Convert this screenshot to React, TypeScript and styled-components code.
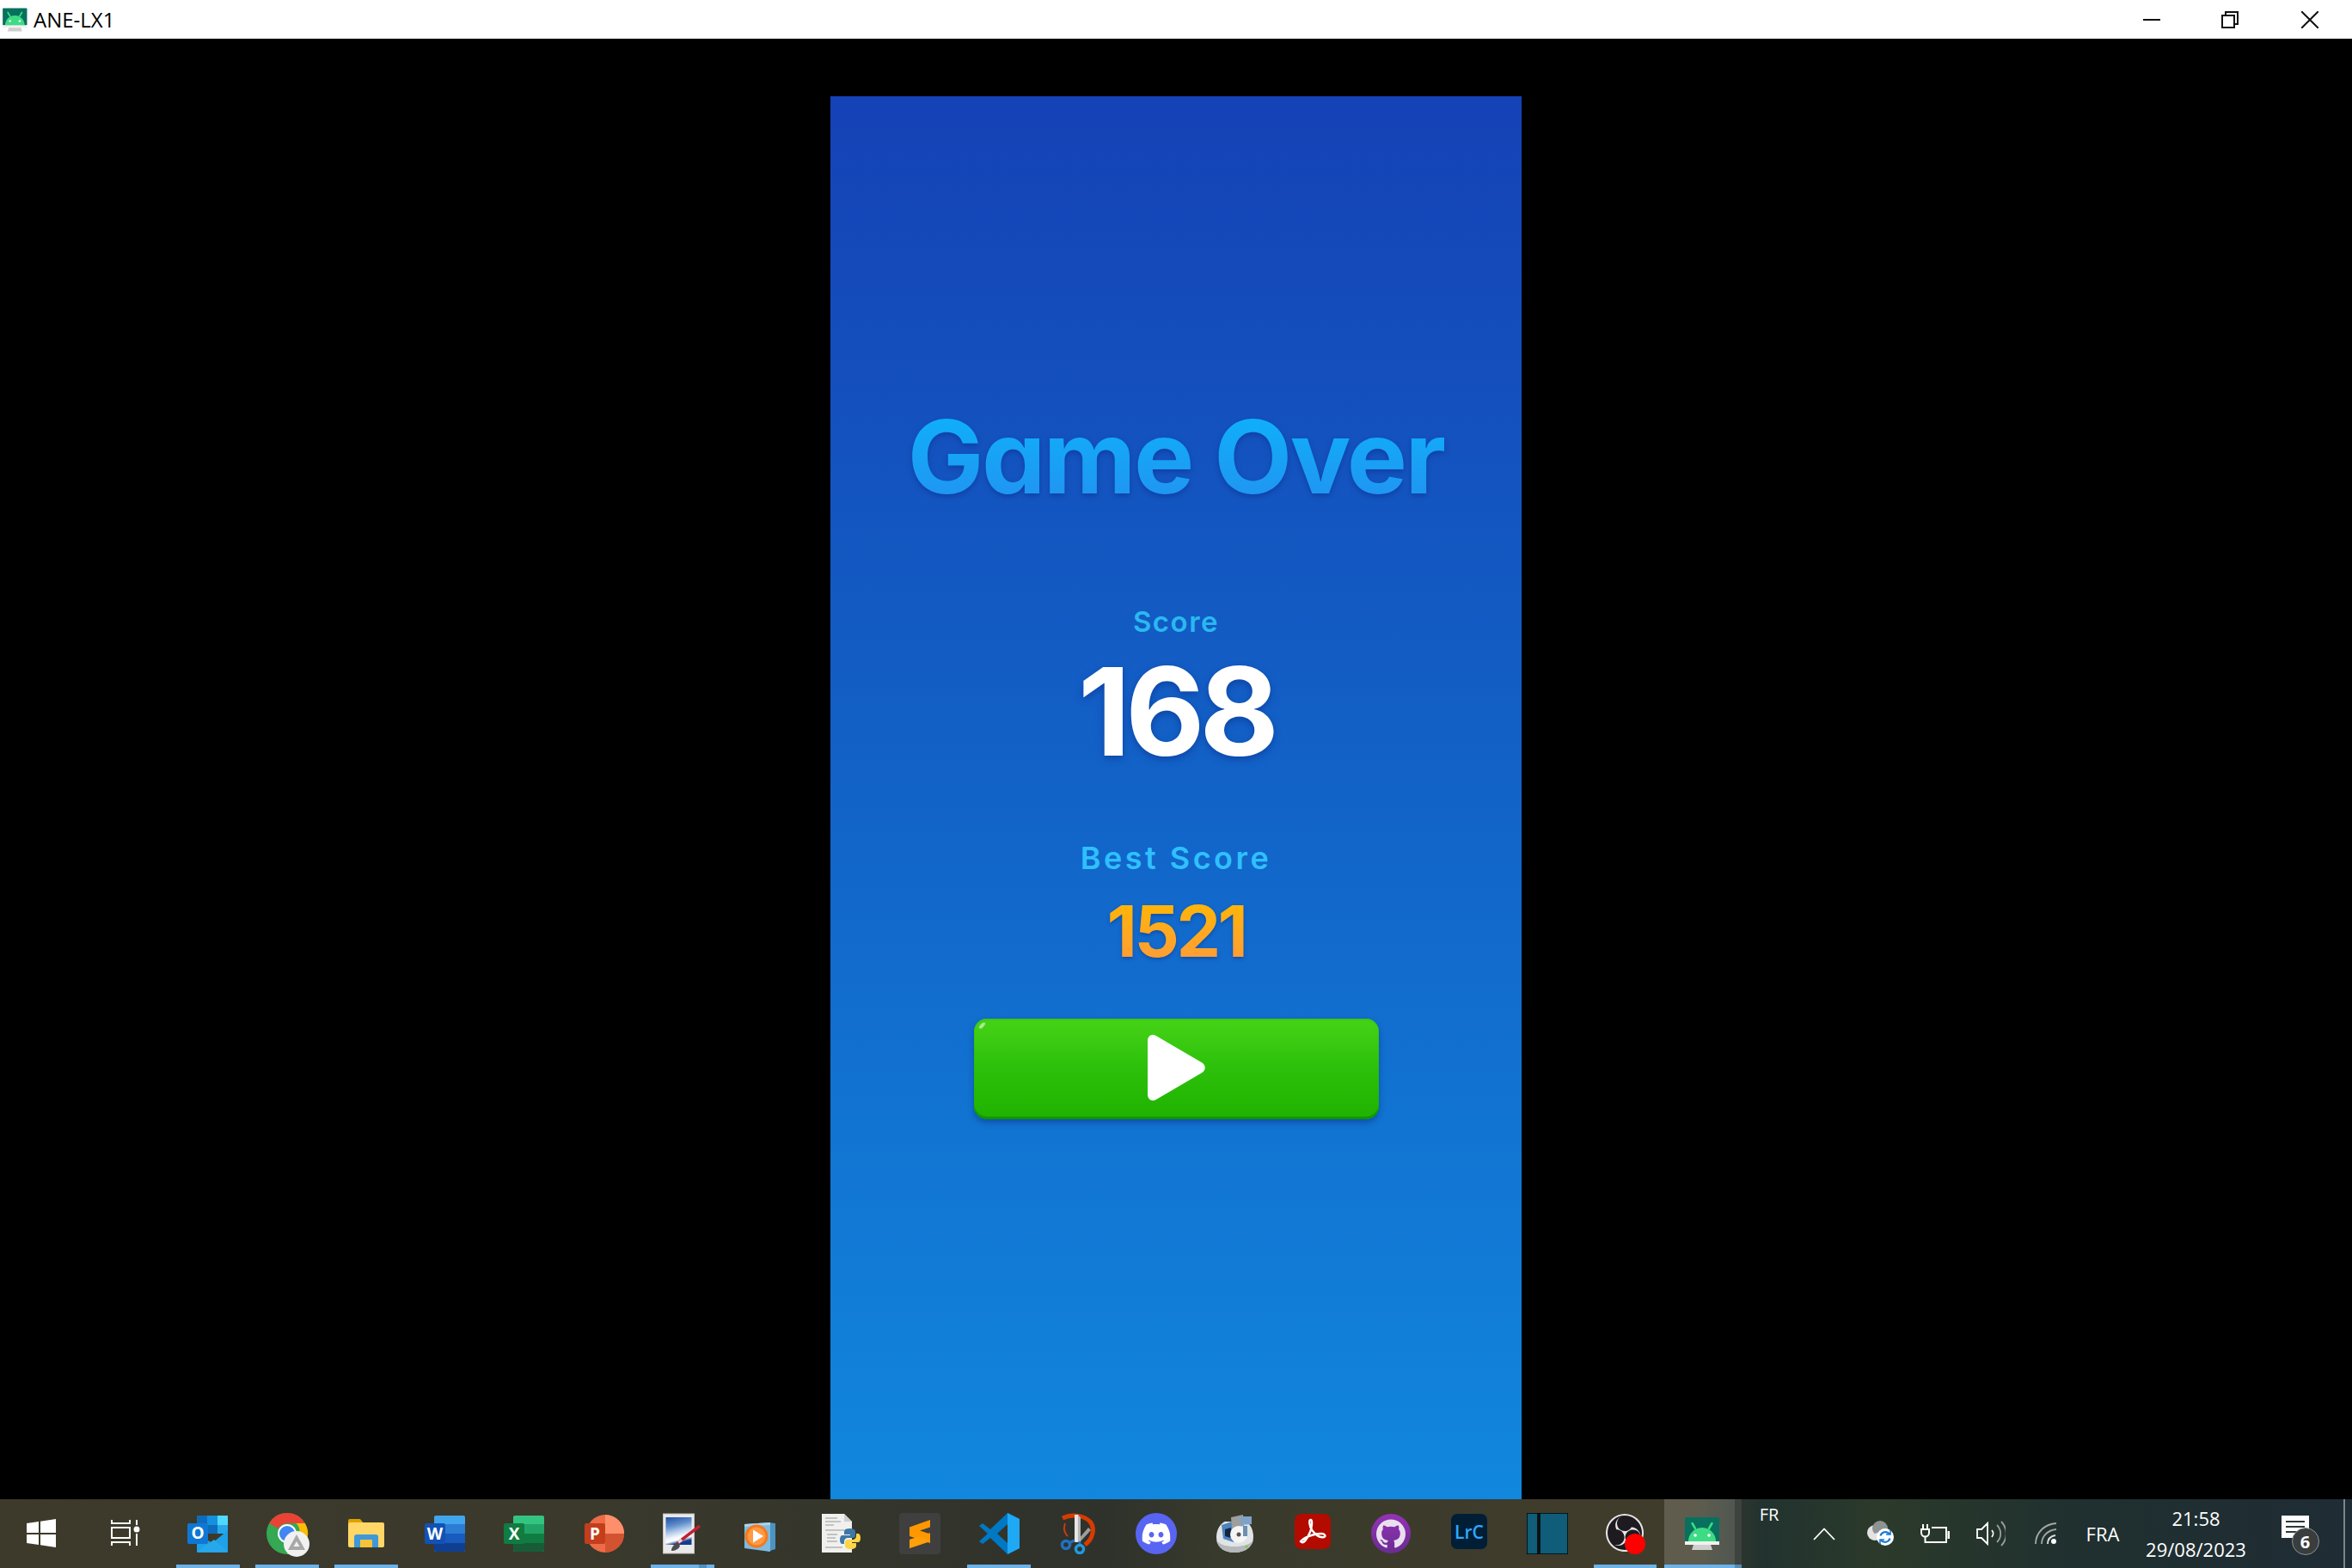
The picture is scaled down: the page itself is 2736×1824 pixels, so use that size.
import React from "react";
import styled, { createGlobalStyle } from "styled-components";
import { SiDiscord, SiGithub, SiObsstudio } from "react-icons/si";

const GlobalStyle = createGlobalStyle`
  html, body {
    margin: 0;
    padding: 0;
    width: 2736px;
    height: 1824px;
    background: #000;
    overflow: hidden;
  }
  * { box-sizing: border-box; }
`;

const UI_FONT = `"Open Sans", "Noto Sans", sans-serif`;
const GAME_FONT = `Inter, Lato, sans-serif`;

const OutlookIcon = () => (
  <svg width="48" height="48" viewBox="0 0 48 48">
    <rect x="11" y="3" width="36" height="21" fill="#0f6cbd" />
    <rect x="23" y="3" width="12" height="11" fill="#1490df" />
    <rect x="35" y="3" width="12" height="11" fill="#50d9ff" />
    <rect x="23" y="14" width="12" height="10" fill="#0f6cbd" />
    <rect x="35" y="14" width="12" height="10" fill="#28a8ea" />
    <path d="M11 24l18 11 18-15v25a1 1 0 0 1-1 1H12a1 1 0 0 1-1-1z" fill="#1da1ea" />
    <path d="M11 45l20-14 16 14z" fill="#28a8ea" />
    <rect x="0" y="12" width="24" height="24" rx="2" fill="#0f78d4" />
    <text x="12" y="30" fontFamily={UI_FONT} fontWeight="700" fontSize="19" fill="#fff" textAnchor="middle">O</text>
  </svg>
);

const ChromeIcon = () => (
  <svg width="60" height="60" viewBox="0 0 60 60">
    <circle cx="30" cy="30" r="24" fill="#34a853" />
    <path d="M30 6a24 24 0 0 1 20.8 12H30a12 12 0 0 0-10.4 6L9.2 18A24 24 0 0 1 30 6z" fill="#ea4335" />
    <path d="M50.8 18A24 24 0 0 1 30 54l10.4-18a12 12 0 0 0 0-18z" fill="#fbbc04" />
    <circle cx="30" cy="30" r="11" fill="#fff" />
    <circle cx="30" cy="30" r="9" fill="#4285f4" />
    <circle cx="41" cy="42" r="15" fill="#f1f1f1" />
    <path d="M41 31l10 18H31z" fill="#a8a8a8" />
    <path d="M41 39l3.5 6h-7z" fill="#f1f1f1" />
  </svg>
);

const ExplorerIcon = () => (
  <svg width="48" height="48" viewBox="0 0 48 48">
    <path d="M3 9a2 2 0 0 1 2-2h12l4 5H3z" fill="#e0a100" />
    <rect x="3" y="11" width="42" height="29" rx="2" fill="#ffd766" />
    <path d="M10 40V28a3 3 0 0 1 3-3h22a3 3 0 0 1 3 3v12h-7v-9H17v9z" fill="#3f98d8" />
    <rect x="17" y="31" width="14" height="9" fill="#f7c23a" />
  </svg>
);

const OfficeIcon = ({ tile, shades, letter }: { tile: string; shades: string[]; letter: string }) => (
  <svg width="48" height="48" viewBox="0 0 48 48">
    <rect x="11" y="3" width="36" height="42" rx="2" fill={shades[0]} />
    <rect x="11" y="13" width="36" height="11" fill={shades[1]} />
    <rect x="11" y="24" width="36" height="11" fill={shades[2]} />
    <path d="M11 35h36v8a2 2 0 0 1-2 2H13a2 2 0 0 1-2-2z" fill={shades[3]} />
    <rect x="0" y="12" width="24" height="24" rx="2" fill={tile} />
    <text x="12" y="30.5" fontFamily={UI_FONT} fontWeight="700" fontSize="19" fill="#fff" textAnchor="middle">{letter}</text>
  </svg>
);

const PowerPointIcon = () => (
  <svg width="48" height="48" viewBox="0 0 48 48">
    <circle cx="26" cy="24" r="22" fill="#ed6c47" />
    <path d="M26 2a22 22 0 0 1 22 22H26z" fill="#ff8f6b" />
    <path d="M26 24h22a22 22 0 0 1-22 22z" fill="#d35230" />
    <rect x="2" y="12" width="24" height="24" rx="2" fill="#c43e1c" />
    <text x="14" y="30.5" fontFamily={UI_FONT} fontWeight="700" fontSize="19" fill="#fff" textAnchor="middle">P</text>
  </svg>
);

const PaintIcon = () => (
  <svg width="52" height="48" viewBox="0 0 52 48">
    <defs>
      <linearGradient id="paintSky" x1="0" y1="0" x2="0.25" y2="1">
        <stop offset="0" stopColor="#1f4ea8" />
        <stop offset="0.35" stopColor="#5f8ecb" />
        <stop offset="0.6" stopColor="#b9d0ec" />
        <stop offset="0.78" stopColor="#f4f8fd" />
        <stop offset="0.88" stopColor="#ffffff" />
        <stop offset="1" stopColor="#143d8c" />
      </linearGradient>
    </defs>
    <rect x="3.500" y="1" width="36" height="46" fill="#e9e9e9" stroke="#c3c3c3" />
    <rect x="6.500" y="5" width="30" height="32" fill="url(#paintSky)" />
    <path d="M20 35L46 15" stroke="#c3202f" strokeWidth="3.500" />
    <path d="M21 34l4-3" stroke="#d9d9d9" strokeWidth="4" />
    <path d="M13 44c0-4 3-8 7-9l3 3c-1 4-6 6-10 6z" fill="#4d4d4d" />
  </svg>
);

const MediaIcon = () => (
  <svg width="48" height="48" viewBox="0 0 48 48">
    <path d="M31 11l9 1v30l-9 3z" fill="#4c93c0" />
    <path d="M4 13l30-2v34L4 41z" fill="#7ebbe0" />
    <path d="M4 13l30-2v3L4 16z" fill="#a9d5ef" />
    <circle cx="18" cy="27" r="13.500" fill="#f37a1f" />
    <circle cx="18" cy="27" r="10.500" fill="#ff9a42" />
    <path d="M14 19.500l12 7.500-12 7.500z" fill="#fff" />
  </svg>
);

const PythonFileIcon = () => (
  <svg width="48" height="48" viewBox="0 0 48 48">
    <path d="M2 1h26l9 9v36H2z" fill="#f0f0ee" />
    <path d="M28 1v9h9z" fill="#cfcfcf" />
    <path d="M6 6h14M6 10h18M6 14h10M6 20h22M8 25h12M8 29h10M8 33h12M6 40h20" stroke="#b4b4b4" strokeWidth="1.500" />
    <path
      d="M35 18c-6 0-7 2-7 4v3h7v1H26c-2 0-3 2-3 5s1 5 3 5h2v-3c0-2 2-4 4-4h6c2 0 3-1 3-3v-4c0-2-2-4-6-4z"
      fill="#3d77a8"
    />
    <path
      d="M35 18c-6 0-7 2-7 4v3h7v1H26c-2 0-3 2-3 5s1 5 3 5h2v-3c0-2 2-4 4-4h6c2 0 3-1 3-3v-4c0-2-2-4-6-4z"
      fill="#fdd443"
      transform="rotate(180 35 30)"
    />
  </svg>
);

const SublimeIcon = () => (
  <svg width="48" height="48" viewBox="0 0 48 48">
    <rect width="48" height="48" rx="4" fill="#3f3f3f" />
    <path d="M12 31l24-8v10l-24 8z" fill="#e58a00" />
    <path d="M36 8L12 16.500V27l24 8V24.500L24 20.500l12-4z" fill="#ff9800" />
    <path d="M12 31l11-3.500 13 4.500V33l-24 8z" fill="#ff9f0a" />
  </svg>
);

const VsCodeIcon = () => (
  <svg width="48" height="48" viewBox="0 0 48 48">
    <path d="M34 0l14 7v34l-14 7-20-19-9 7-4-3 10-9L1 15l4-3 9 7z" fill="#0078c4" />
    <path d="M34 0l14 7v34l-14 7V0z" fill="#1fa9f4" />
    <path d="M34 13L22 24l12 11z" fill="#33342b" />
  </svg>
);

const SnipIcon = () => (
  <svg width="48" height="48" viewBox="0 0 48 48">
    <path d="M6 6c10-5 24-4 32 4 6 7 4 20-6 27" fill="none" stroke="#d83b01" strokeWidth="5" />
    <path d="M9 12c-2 6-1 11 3 15" fill="none" stroke="#c63a10" strokeWidth="2" />
    <path d="M36 17l-12 14 2 3 13-14z" fill="#9e9e9e" />
    <path d="M20 2l4 0 3 4v28h-7z" fill="#e6e6e6" />
    <path d="M24 2l3 4v28h-3z" fill="#b5b5b5" />
    <path d="M20 32l-7 3M26 33l0 5" stroke="#1f72c4" strokeWidth="3" />
    <circle cx="10" cy="37" r="4.500" fill="none" stroke="#1f72c4" strokeWidth="3.500" />
    <circle cx="26" cy="42" r="4.500" fill="none" stroke="#1f9be0" strokeWidth="3.500" />
  </svg>
);

const DiscordIcon = () => (
  <svg width="48" height="48" viewBox="0 0 48 48">
    <circle cx="24" cy="24" r="24" fill="#5865f2" />
    <SiDiscord x="7.500" y="7.500" size="33" color="#fff" />
  </svg>
);

const DiscIcon = () => (
  <svg width="48" height="48" viewBox="0 0 48 48">
    <path d="M3 28c0-9 5-16 10-18h24c5 2 9 9 9 18 0 10-8 18-22 18S3 38 3 28z" fill="#e1e4e6" />
    <path d="M3 32c2 9 10 14 21 14s19-5 22-14c-5 5-12 7-22 7S8 37 3 32z" fill="#b6b9bb" />
    <path d="M9 14l12-4 2 24-12-4z" fill="#4f83bd" />
    <path d="M13 19l7-2v12l-7-2z" fill="#14263f" />
    <path d="M20 5l14-3 1 13-14 3z" fill="#9e9e9e" />
    <path d="M31 4h13v9l-13 1z" fill="#7fa3c7" />
    <circle cx="29" cy="25" r="10" fill="#f5f5f5" />
    <circle cx="29" cy="25" r="2.500" fill="#555" />
    <path d="M34 15v12h5V15z" fill="#6c8fb4" />
    <circle cx="38" cy="39" r="1.500" fill="#7ac943" />
  </svg>
);

const AcrobatIcon = () => (
  <svg width="48" height="48" viewBox="0 0 48 48">
    <rect x="3" y="1" width="42" height="41" rx="8" fill="#b30b00" />
    <path
      d="M10 33c3 4 7-2 11-11 2-5 3-13 1-14-3-1-2 8 2 13 4 5 9 8 13 7 3-1 1-4-3-4-7 0-18 3-24 9z"
      fill="none"
      stroke="#fff"
      strokeWidth="2.400"
    />
  </svg>
);

const GithubBadge = () => (
  <svg width="48" height="48" viewBox="0 0 48 48">
    <defs>
      <linearGradient id="ghPurple" x1="0" y1="0" x2="0" y2="1">
        <stop offset="0" stopColor="#9433b6" />
        <stop offset="1" stopColor="#6a2c91" />
      </linearGradient>
    </defs>
    <circle cx="24" cy="24" r="23" fill="url(#ghPurple)" />
    <SiGithub x="7" y="7" size="34" color="#eadff0" />
  </svg>
);

const LightroomIcon = () => (
  <svg width="48" height="48" viewBox="0 0 48 48">
    <rect x="3" y="1" width="42" height="41" rx="7" fill="#001e36" />
    <text x="24" y="30" fontFamily={UI_FONT} fontWeight="600" fontSize="21" fill="#31a8ff" textAnchor="middle">LrC</text>
  </svg>
);

const PanelsIcon = () => (
  <svg width="48" height="48" viewBox="0 0 48 48">
    <rect x="0" y="0" width="13" height="48" fill="#0f5d78" stroke="#000" strokeWidth="1.500" />
    <rect x="15" y="0" width="33" height="48" fill="#0f5d78" stroke="#000" strokeWidth="1.500" />
  </svg>
);

const ObsIcon = () => (
  <svg width="48" height="48" viewBox="0 0 48 48">
    <circle cx="23" cy="23" r="21.500" fill="#1d1b20" />
    <SiObsstudio x="1" y="1" size="44" color="#e6e6e6" />
    <circle cx="35" cy="36" r="12" fill="#ff0000" />
  </svg>
);

const AndroidStudioIcon = ({ size = 48 }: { size?: number }) => (
  <svg width={size} height={size} viewBox="0 0 48 48">
    <rect x="3" y="5" width="40" height="28" rx="1" fill="#08705e" />
    <path d="M15 18l-3.500-6M31 18l3.500-6" stroke="#3ddc84" strokeWidth="2.500" strokeLinecap="round" />
    <path d="M7 33a16 16 0 0 1 32 0z" fill="#3ddc84" />
    <circle cx="15" cy="26" r="1.800" fill="#fff" />
    <circle cx="31" cy="26" r="1.800" fill="#fff" />
    <rect x="3" y="33" width="40" height="4" fill="#f1f1f1" />
    <path d="M13 37h20l2 6H11z" fill="#cfcfcf" />
  </svg>
);

const apps: { node: React.ReactNode; line?: "full" | "stack"; narrow?: boolean }[] = [
  { node: <OutlookIcon />, line: "full" },
  { node: <ChromeIcon />, line: "full" },
  { node: <ExplorerIcon />, line: "full" },
  { node: <OfficeIcon tile="#1252b5" letter="W" shades={["#41a5ee", "#2b7cd3", "#185abd", "#103f91"]} /> },
  { node: <OfficeIcon tile="#107c41" letter="X" shades={["#33c481", "#21a366", "#107c41", "#185c37"]} /> },
  { node: <PowerPointIcon /> },
  { node: <PaintIcon />, line: "stack" },
  { node: <MediaIcon /> },
  { node: <PythonFileIcon /> },
  { node: <SublimeIcon /> },
  { node: <VsCodeIcon />, line: "full" },
  { node: <SnipIcon />, narrow: true },
  { node: <DiscordIcon />, narrow: true },
  { node: <DiscIcon />, narrow: true },
  { node: <AcrobatIcon />, narrow: true },
  { node: <GithubBadge />, narrow: true },
  { node: <LightroomIcon />, narrow: true },
  { node: <PanelsIcon />, narrow: true },
  { node: <ObsIcon />, line: "full", narrow: true },
];

export default function App() {
  return (
    <Screen>
      <GlobalStyle />
      <TitleBar>
        <TitleLeft>
          <AndroidStudioIcon size={34} />
          <TitleText>ANE-LX1</TitleText>
        </TitleLeft>
        <WindowControls>
          <WindowButton>
            <svg width="20" height="20" viewBox="0 0 20 20"><path d="M0 10h20" stroke="#111" strokeWidth="2" /></svg>
          </WindowButton>
          <WindowButton>
            <svg width="20" height="20" viewBox="0 0 20 20" fill="none" stroke="#111" strokeWidth="2">
              <rect x="1" y="5" width="14" height="14" />
              <path d="M5 5V1h14v14h-4" />
            </svg>
          </WindowButton>
          <WindowButton>
            <svg width="20" height="20" viewBox="0 0 20 20"><path d="M0 0l20 20M20 0L0 20" stroke="#111" strokeWidth="2" /></svg>
          </WindowButton>
        </WindowControls>
      </TitleBar>

      <Stage>
        <PhoneView>
          <Title>Game Over</Title>
          <ScoreLabel>Score</ScoreLabel>
          <ScoreValue>168</ScoreValue>
          <BestLabel>Best Score</BestLabel>
          <BestValue>1521</BestValue>
          <PlayButton>
            <Gloss />
            <svg width="70" height="78" viewBox="0 0 70 78">
              <path d="M2 8c0-6 5-9 10-6l53 31c5 3 5 9 0 12L12 76c-5 3-10 0-10-6z" fill="#fff" />
            </svg>
          </PlayButton>
        </PhoneView>
      </Stage>

      <Taskbar>
        <SystemButton $width={96}>
          <svg width="34" height="33" viewBox="0 0 34 33" fill="#fff">
            <path d="M0 5l14-2v13H0zM16 2.700L34 0v16H16zM0 18h14v12L0 28zM16 18h18v15l-18-2.700z" />
          </svg>
        </SystemButton>
        <SystemButton $width={100}>
          <svg width="34" height="30" viewBox="0 0 34 30" fill="none" stroke="#fff" strokeWidth="2">
            <path d="M1 0v4h21V0M1 30v-4h21v4" />
            <rect x="1" y="9" width="21" height="12" />
            <path d="M30 0v6M30 16v14" />
            <circle cx="30" cy="11" r="2.500" fill="#fff" />
          </svg>
        </SystemButton>

        {apps.map((app, index) => (
          <AppSlot key={index} $narrow={app.narrow}>
            {app.node}
            {app.line && <RunningLine />}
            {app.line === "stack" && <StackedLine />}
          </AppSlot>
        ))}
        <ActiveSlot>
          <AndroidStudioIcon />
          <RunningLine $wide />
          <ActiveEdge />
        </ActiveSlot>

        <Tray>
          <LanguageTop>FR</LanguageTop>
          <TrayIcon>
            <svg width="26" height="15" viewBox="0 0 26 15" fill="none" stroke="#fff" strokeWidth="1.800"><path d="M1 14L13 1.500 25 14" /></svg>
          </TrayIcon>
          <TrayIcon>
            <svg width="34" height="30" viewBox="0 0 34 30">
              <circle cx="11" cy="14" r="9" fill="#e3e3e3" />
              <circle cx="17" cy="9" r="9" fill="#8f9492" />
              <path d="M3 17l22-6v9H8z" fill="#e3e3e3" />
              <circle cx="23" cy="19" r="10" fill="#fff" />
              <path d="M17.500 17.500a6 6 0 0 1 10.500-2M28.500 20.500a6 6 0 0 1-10.500 2" fill="none" stroke="#1478d4" strokeWidth="2.200" />
              <path d="M29 11v5h-5M17 27v-5h5" fill="none" stroke="#1478d4" strokeWidth="1.600" />
            </svg>
          </TrayIcon>
          <TrayIcon>
            <svg width="34" height="22" viewBox="0 0 34 22" fill="none" stroke="#fff" strokeWidth="2">
              <path d="M3 0v6M8 0v6M1 6h9v4a4 4 0 0 1-9 0zM5.500 14v7H30V4H13" />
              <path d="M33 8v9" strokeWidth="3" />
            </svg>
          </TrayIcon>
          <TrayIcon>
            <svg width="34" height="30" viewBox="0 0 34 30" fill="none" stroke="#fff" strokeWidth="1.800">
              <path d="M1 10h5l7-7v24l-7-7H1z" />
              <path d="M18 11a6 6 0 0 1 0 8" />
              <path d="M24 5a14 14 0 0 1 0 20" stroke="#9a9f9c" />
              <path d="M29 1a20 20 0 0 1 0 28" stroke="#9a9f9c" />
            </svg>
          </TrayIcon>
          <TrayIcon>
            <svg width="26" height="26" viewBox="0 0 26 26" fill="none" stroke="#a3a8a5" strokeWidth="1.800">
              <path d="M1 25C1 12 11 2 25 1" />
              <path d="M8 25c0-9 7-16 17-17" />
              <path d="M15 25c0-5 3-9 9-10" stroke="#e0e3e1" />
              <circle cx="22" cy="22" r="3" fill="#fff" stroke="none" />
            </svg>
          </TrayIcon>
          <LanguageCode>FRA</LanguageCode>
          <Clock>
            <span>21:58</span>
            <span>29/08/2023</span>
          </Clock>
          <NotificationSlot>
            <NotificationGlyph>
              <svg width="32" height="36" viewBox="0 0 32 36">
                <path d="M0 0h32v26H22l-6 8v-8H0z" fill="#fff" />
                <path d="M5 7h22M5 13h22M5 19h14" stroke="#2a3a3c" strokeWidth="2" />
              </svg>
              <Badge>6</Badge>
            </NotificationGlyph>
          </NotificationSlot>
        </Tray>
      </Taskbar>
    </Screen>
  );
}

const Screen = styled.div`
  width: 2736px;
  height: 1824px;
  display: flex;
  flex-direction: column;
  background: #000;
  overflow: hidden;
`;

const TitleBar = styled.div`
  height: 45px;
  flex: none;
  background: #fff;
  display: flex;
  align-items: center;
  justify-content: space-between;
  font-family: ${UI_FONT};
`;

const TitleLeft = styled.div`
  display: flex;
  align-items: center;
  gap: 4px;
  padding-left: 1px;
  svg { display: block; }
`;

const TitleText = styled.span`
  font-size: 24px;
  color: #000;
  line-height: 45px;
`;

const WindowControls = styled.div`
  display: flex;
  gap: 71px;
  padding-right: 39px;
`;

const WindowButton = styled.div`
  width: 20px;
  height: 20px;
  display: flex;
  svg { display: block; }
  &:last-child { margin-left: 2px; }
`;

const Stage = styled.div`
  flex: none;
  height: 1699px;
  display: flex;
  justify-content: center;
  padding-top: 67px;
`;

const PhoneView = styled.div`
  width: 804px;
  height: 1632px;
  background: linear-gradient(180deg, #1542b6 0%, #1263c8 50%, #1187dd 100%);
  display: flex;
  flex-direction: column;
  align-items: center;
  font-family: ${GAME_FONT};
  font-feature-settings: "cv11" 1;
`;

const Title = styled.div`
  margin-top: 359px;
  font-size: 118px;
  line-height: 120px;
  font-weight: 700;
  letter-spacing: -2.500px;
  background: linear-gradient(180deg, #10aefa 15%, #1f97f2 85%);
  -webkit-background-clip: text;
  background-clip: text;
  color: transparent;
  filter: drop-shadow(0 3px 3px rgba(8, 40, 130, 0.45));
`;

const ScoreLabel = styled.div`
  margin-top: 110px;
  font-size: 33px;
  line-height: 44px;
  font-weight: 600;
  letter-spacing: 1.500px;
  color: #2ab8f0;
`;

const ScoreValue = styled.div`
  margin-top: 17px;
  font-size: 142px;
  line-height: 130px;
  font-weight: 700;
  letter-spacing: -6px;
  color: #fff;
  filter: drop-shadow(0 3px 4px rgba(8, 40, 130, 0.5));
`;

const BestLabel = styled.div`
  margin-top: 82px;
  font-size: 36px;
  line-height: 48px;
  font-weight: 600;
  letter-spacing: 3.500px;
  color: #2fc0ff;
`;

const BestValue = styled.div`
  margin-top: 17px;
  font-size: 82px;
  line-height: 90px;
  font-weight: 700;
  letter-spacing: -3.500px;
  background: linear-gradient(180deg, #ffb30c 20%, #ff9f32 80%);
  -webkit-background-clip: text;
  background-clip: text;
  color: transparent;
  filter: drop-shadow(0 2px 2px rgba(8, 40, 130, 0.45));
`;

const PlayButton = styled.div`
  position: relative;
  margin-top: 56px;
  width: 471px;
  height: 117px;
  border-radius: 15px;
  background: linear-gradient(180deg, #46d317 0%, #2cc00a 50%, #1fb300 100%);
  box-shadow: inset 0 -3px 1px #129400, inset 0 2px 1px #3bc912, 0 4px 7px rgba(8, 40, 120, 0.45);
  display: flex;
  align-items: center;
  justify-content: center;
  svg { display: block; margin-bottom: 4px; }
`;

const Gloss = styled.span`
  position: absolute;
  left: 5px;
  top: 6px;
  width: 9px;
  height: 4px;
  border-radius: 50%;
  background: rgba(255, 255, 255, 0.55);
  transform: rotate(-45deg);
`;

const Taskbar = styled.div`
  flex: none;
  height: 80px;
  display: flex;
  background: linear-gradient(
    90deg,
    #3d3a2b 0%,
    #3a392c 25%,
    #2f322b 47%,
    #383a2c 52%,
    #403c2b 68%,
    #3f3c2b 72%,
    #22322f 75%,
    #2b3a2a 80%,
    #20302f 88%,
    #1f2c35 100%
  );
`;

const SystemButton = styled.div<{ $width: number }>`
  width: ${(p) => p.$width}px;
  flex: none;
  display: flex;
  align-items: center;
  justify-content: center;
  padding-bottom: 2px;
`;

const AppSlot = styled.div<{ $narrow?: boolean }>`
  position: relative;
  width: ${(p) => (p.$narrow ? 91 : 92)}px;
  flex: none;
  display: flex;
  align-items: center;
  justify-content: center;
  svg { display: block; flex: none; }
`;

const ActiveSlot = styled(AppSlot)`
  width: 90px;
  background: rgba(255, 255, 255, 0.17);
`;

const RunningLine = styled.span<{ $wide?: boolean }>`
  position: absolute;
  bottom: 0;
  left: ${(p) => (p.$wide ? "0" : "9px")};
  right: ${(p) => (p.$wide ? "0" : "9px")};
  height: 4px;
  background: #6cb2e8;
`;

const StackedLine = styled.span`
  position: absolute;
  bottom: 0;
  left: 65px;
  width: 9px;
  height: 4px;
  background: #4f8fc4;
`;

const ActiveEdge = styled.span`
  position: absolute;
  top: 0;
  bottom: 0;
  right: 0;
  width: 8px;
  background: rgba(0, 0, 0, 0.22);
`;

const Tray = styled.div`
  flex: 1;
  display: flex;
  align-items: stretch;
  font-family: ${UI_FONT};
  color: #fff;
`;

const LanguageTop = styled.div`
  width: 64px;
  font-size: 20px;
  line-height: 36px;
  text-align: center;
`;

const TrayIcon = styled.div`
  width: 64.500px;
  display: flex;
  align-items: center;
  justify-content: center;
  svg { display: block; }
`;

const LanguageCode = styled.div`
  width: 67px;
  font-size: 22px;
  display: flex;
  align-items: center;
  justify-content: center;
`;

const Clock = styled.div`
  width: 150px;
  display: flex;
  flex-direction: column;
  align-items: center;
  justify-content: center;
  gap: 8px;
  font-size: 22px;
  line-height: 28px;
`;

const NotificationSlot = styled.div`
  flex: 1;
  border-right: 2px solid #7c8689;
  margin-right: 8px;
  padding-left: 24px;
  display: flex;
  align-items: center;
`;

const NotificationGlyph = styled.div`
  position: relative;
  width: 32px;
  height: 36px;
  margin-bottom: 6px;
  svg { display: block; }
`;

const Badge = styled.span`
  position: absolute;
  left: 12px;
  top: 14px;
  width: 32px;
  height: 32px;
  border-radius: 50%;
  background: #3a3d3e;
  border: 1.500px solid #8d9192;
  color: #fff;
  font-size: 20px;
  font-weight: 700;
  display: flex;
  align-items: center;
  justify-content: center;
`;
